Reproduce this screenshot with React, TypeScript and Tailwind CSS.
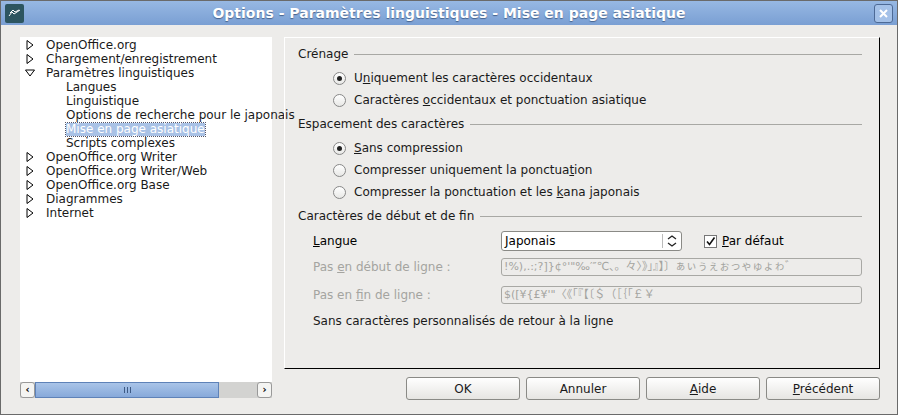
import { ReactNode } from "react";

const font = { fontFamily: '"DejaVu Sans", "Noto Sans CJK JP", sans-serif' };

const startChars = "!%),.:;?]}¢°'\"‰′″℃、。々〉》」』】〕ぁぃぅぇぉっゃゅょゎ゛";
const endChars = "$([¥{£¥'\"〈《「『【〔＄（［｛｢￡￥";

function TreeRow({ label, arrow, indent, selected }: { label: string; arrow?: "right" | "down"; indent?: boolean; selected?: boolean }) {
  return (
    <div className="flex h-[14px] items-center">
      <div className="flex w-[26px] shrink-0 justify-end pr-[12px]">
        {arrow === "right" && (
          <svg width="8" height="10" viewBox="0 0 8 10"><path d="M1 0.5 L7 5 L1 9.5 Z" fill="none" stroke="#000" /></svg>
        )}
        {arrow === "down" && (
          <svg width="10" height="8" viewBox="0 0 10 8" className="-mr-[1px]"><path d="M0.5 1 L9.5 1 L5 7 Z" fill="none" stroke="#000" /></svg>
        )}
      </div>
      <span className={`${indent ? "ml-[20px]" : ""} whitespace-nowrap leading-[13px] ${selected ? "bg-[#a9c2e6] text-white outline outline-1 outline-dotted outline-[#556]" : "text-[#1a1a1a]"}`}>
        {label}
      </span>
    </div>
  );
}

function Radio({ checked, children }: { checked?: boolean; children: ReactNode }) {
  return (
    <div className="flex h-[22px] items-center pl-[35px]">
      <div className="flex h-[13px] w-[13px] items-center justify-center rounded-full border border-[#888] bg-gradient-to-b from-white to-[#e8e8e6]">
        {checked && <div className="h-[5px] w-[5px] rounded-full bg-[#222]" />}
      </div>
      <span className="ml-[8px] text-[#1a1a1a]">{children}</span>
    </div>
  );
}

function Section({ title }: { title: string }) {
  return (
    <div className="flex h-[26px] items-center pr-[17px]">
      <span className="text-[#1a1a1a]">{title}</span>
      <div className="ml-[6px] h-px flex-1 bg-[#a8a8a4]" />
    </div>
  );
}

function Btn({ children }: { children: ReactNode }) {
  return (
    <button className="h-[23px] w-[114px] rounded-[3px] border border-[#8a8a86] bg-gradient-to-b from-white to-[#e6e5e2] text-[#1a1a1a]">
      {children}
    </button>
  );
}

export default function App() {
  return (
    <div style={font} className="flex h-[415px] w-[898px] flex-col overflow-hidden border border-[#6a6a6a] bg-[#edecea] text-[12px]">
      <div className="flex h-[24px] items-center bg-gradient-to-b from-[#97b8e3] to-[#7a9fd3] px-[4px]">
        <div className="flex h-[19px] w-[19px] items-center justify-center rounded-[2px] bg-[#2d5560]">
          <svg width="13" height="8" viewBox="0 0 13 8"><path d="M1 7 L4 3 L6 5 L12 1 M2 4 L5 1 L7 3 L11 1" stroke="#fff" strokeWidth="1" fill="none" /></svg>
        </div>
        <div className="flex-1 text-center text-[14px] font-bold text-white [text-shadow:0_1px_1px_#46628c]">Options - Paramètres linguistiques - Mise en page asiatique</div>
        <div className="flex h-[19px] w-[19px] items-center justify-center rounded-[3px] border border-[#4d6a96] bg-[#a4c1e8]">
          <svg width="9" height="9" viewBox="0 0 9 9"><path d="M1 1 L8 8 M8 1 L1 8" stroke="#fff" strokeWidth="2" /></svg>
        </div>
      </div>
      <div className="flex flex-1 pt-[12px]">
        <div className="ml-[19px] flex w-[252px] flex-col">
          <div className="flex-1 bg-white pt-[1px]">
            <TreeRow label="OpenOffice.org" arrow="right" />
            <TreeRow label="Chargement/enregistrement" arrow="right" />
            <TreeRow label="Paramètres linguistiques" arrow="down" />
            <TreeRow label="Langues" indent />
            <TreeRow label="Linguistique" indent />
            <TreeRow label="Options de recherche pour le japonais" indent />
            <TreeRow label="Mise en page asiatique" indent selected />
            <TreeRow label="Scripts complexes" indent />
            <TreeRow label="OpenOffice.org Writer" arrow="right" />
            <TreeRow label="OpenOffice.org Writer/Web" arrow="right" />
            <TreeRow label="OpenOffice.org Base" arrow="right" />
            <TreeRow label="Diagrammes" arrow="right" />
            <TreeRow label="Internet" arrow="right" />
          </div>
          <div className="mb-[16px] flex h-[16px] bg-[#d3d3d1]">
            <div className="flex w-[15px] items-center justify-center rounded-[3px] border border-[#999] bg-[#f4f4f2] text-[10px] font-bold leading-none">‹</div>
            <div className="flex w-[184px] items-center justify-center border border-[#5e82b8] bg-gradient-to-b from-[#a9c4e8] to-[#87a9da]">
              <svg width="7" height="6" viewBox="0 0 7 6"><path d="M0.5 0 V6 M3.5 0 V6 M6.5 0 V6" stroke="#3d5a85" /></svg>
            </div>
            <div className="flex-1" />
            <div className="flex w-[15px] items-center justify-center rounded-[3px] border border-[#999] bg-[#f4f4f2] text-[10px] font-bold leading-none">›</div>
          </div>
        </div>
        <div className="ml-[12px] mr-[17px] flex flex-1 flex-col">
          <div className="h-[332px] border-b border-r border-b-[#000] border-r-[#000] border-t border-l border-t-white border-l-white pl-[13px] pt-[3px]">
            <Section title="Crénage" />
            <Radio checked>U<u>n</u>iquement les caractères occidentaux</Radio>
            <Radio>Caractères <u>o</u>ccidentaux et ponctuation asiatique</Radio>
            <Section title="Espacement des caractères" />
            <Radio checked><u>S</u>ans compression</Radio>
            <Radio>Compresser uniquement la ponctua<u>t</u>ion</Radio>
            <Radio>Compresser la ponctuation et les <u>k</u>ana japonais</Radio>
            <Section title="Caractères de début et de fin" />
            <div className="flex h-[24px] items-center pl-[15px]">
              <span className="w-[188px]"><u>L</u>angue</span>
              <div className="flex h-[20px] w-[181px] items-center rounded-[3px] border border-[#8a8a86] bg-white pl-[3px]">
                <span className="flex-1">Japonais</span>
                <div className="h-[14px] w-px bg-[#bbb]" />
                <svg width="18" height="14" viewBox="0 0 18 14"><path d="M5 5 L9 2 L13 5 M5 9 L9 12 L13 9" stroke="#222" strokeWidth="1.3" fill="none" /></svg>
              </div>
              <div className="ml-[22px] flex h-[13px] w-[13px] items-center justify-center border border-[#777] bg-white">
                <svg width="11" height="11" viewBox="0 0 11 11"><path d="M2 5.5 L4.5 8.5 L9.5 1.5" stroke="#111" strokeWidth="1.6" fill="none" /></svg>
              </div>
              <span className="ml-[5px]"><u>P</u>ar défaut</span>
            </div>
            <div className="flex h-[28px] items-center pl-[15px] text-[#a4a4a0]">
              <span className="w-[188px] shrink-0">Pas <u>e</u>n début de ligne :</span>
              <div className="mr-[17px] h-[18px] flex-1 overflow-hidden whitespace-nowrap rounded-[3px] border border-[#a8a8a4] pl-[2px] text-[11px] leading-[16px]">{startChars}</div>
            </div>
            <div className="flex h-[28px] items-center pl-[15px] text-[#a4a4a0]">
              <span className="w-[188px] shrink-0">Pas en <u>f</u>in de ligne :</span>
              <div className="mr-[17px] h-[18px] flex-1 overflow-hidden whitespace-nowrap rounded-[3px] border border-[#a8a8a4] pl-[2px] text-[11px] leading-[16px]">{endChars}</div>
            </div>
            <div className="flex h-[24px] items-center pl-[15px] text-[#1a1a1a]">Sans caractères personnalisés de retour à la ligne</div>
          </div>
          <div className="mt-[8px] flex justify-end gap-[6px]">
            <Btn>OK</Btn>
            <Btn>Annuler</Btn>
            <Btn><u>A</u>ide</Btn>
            <Btn><u>P</u>récédent</Btn>
          </div>
        </div>
      </div>
    </div>
  );
}
